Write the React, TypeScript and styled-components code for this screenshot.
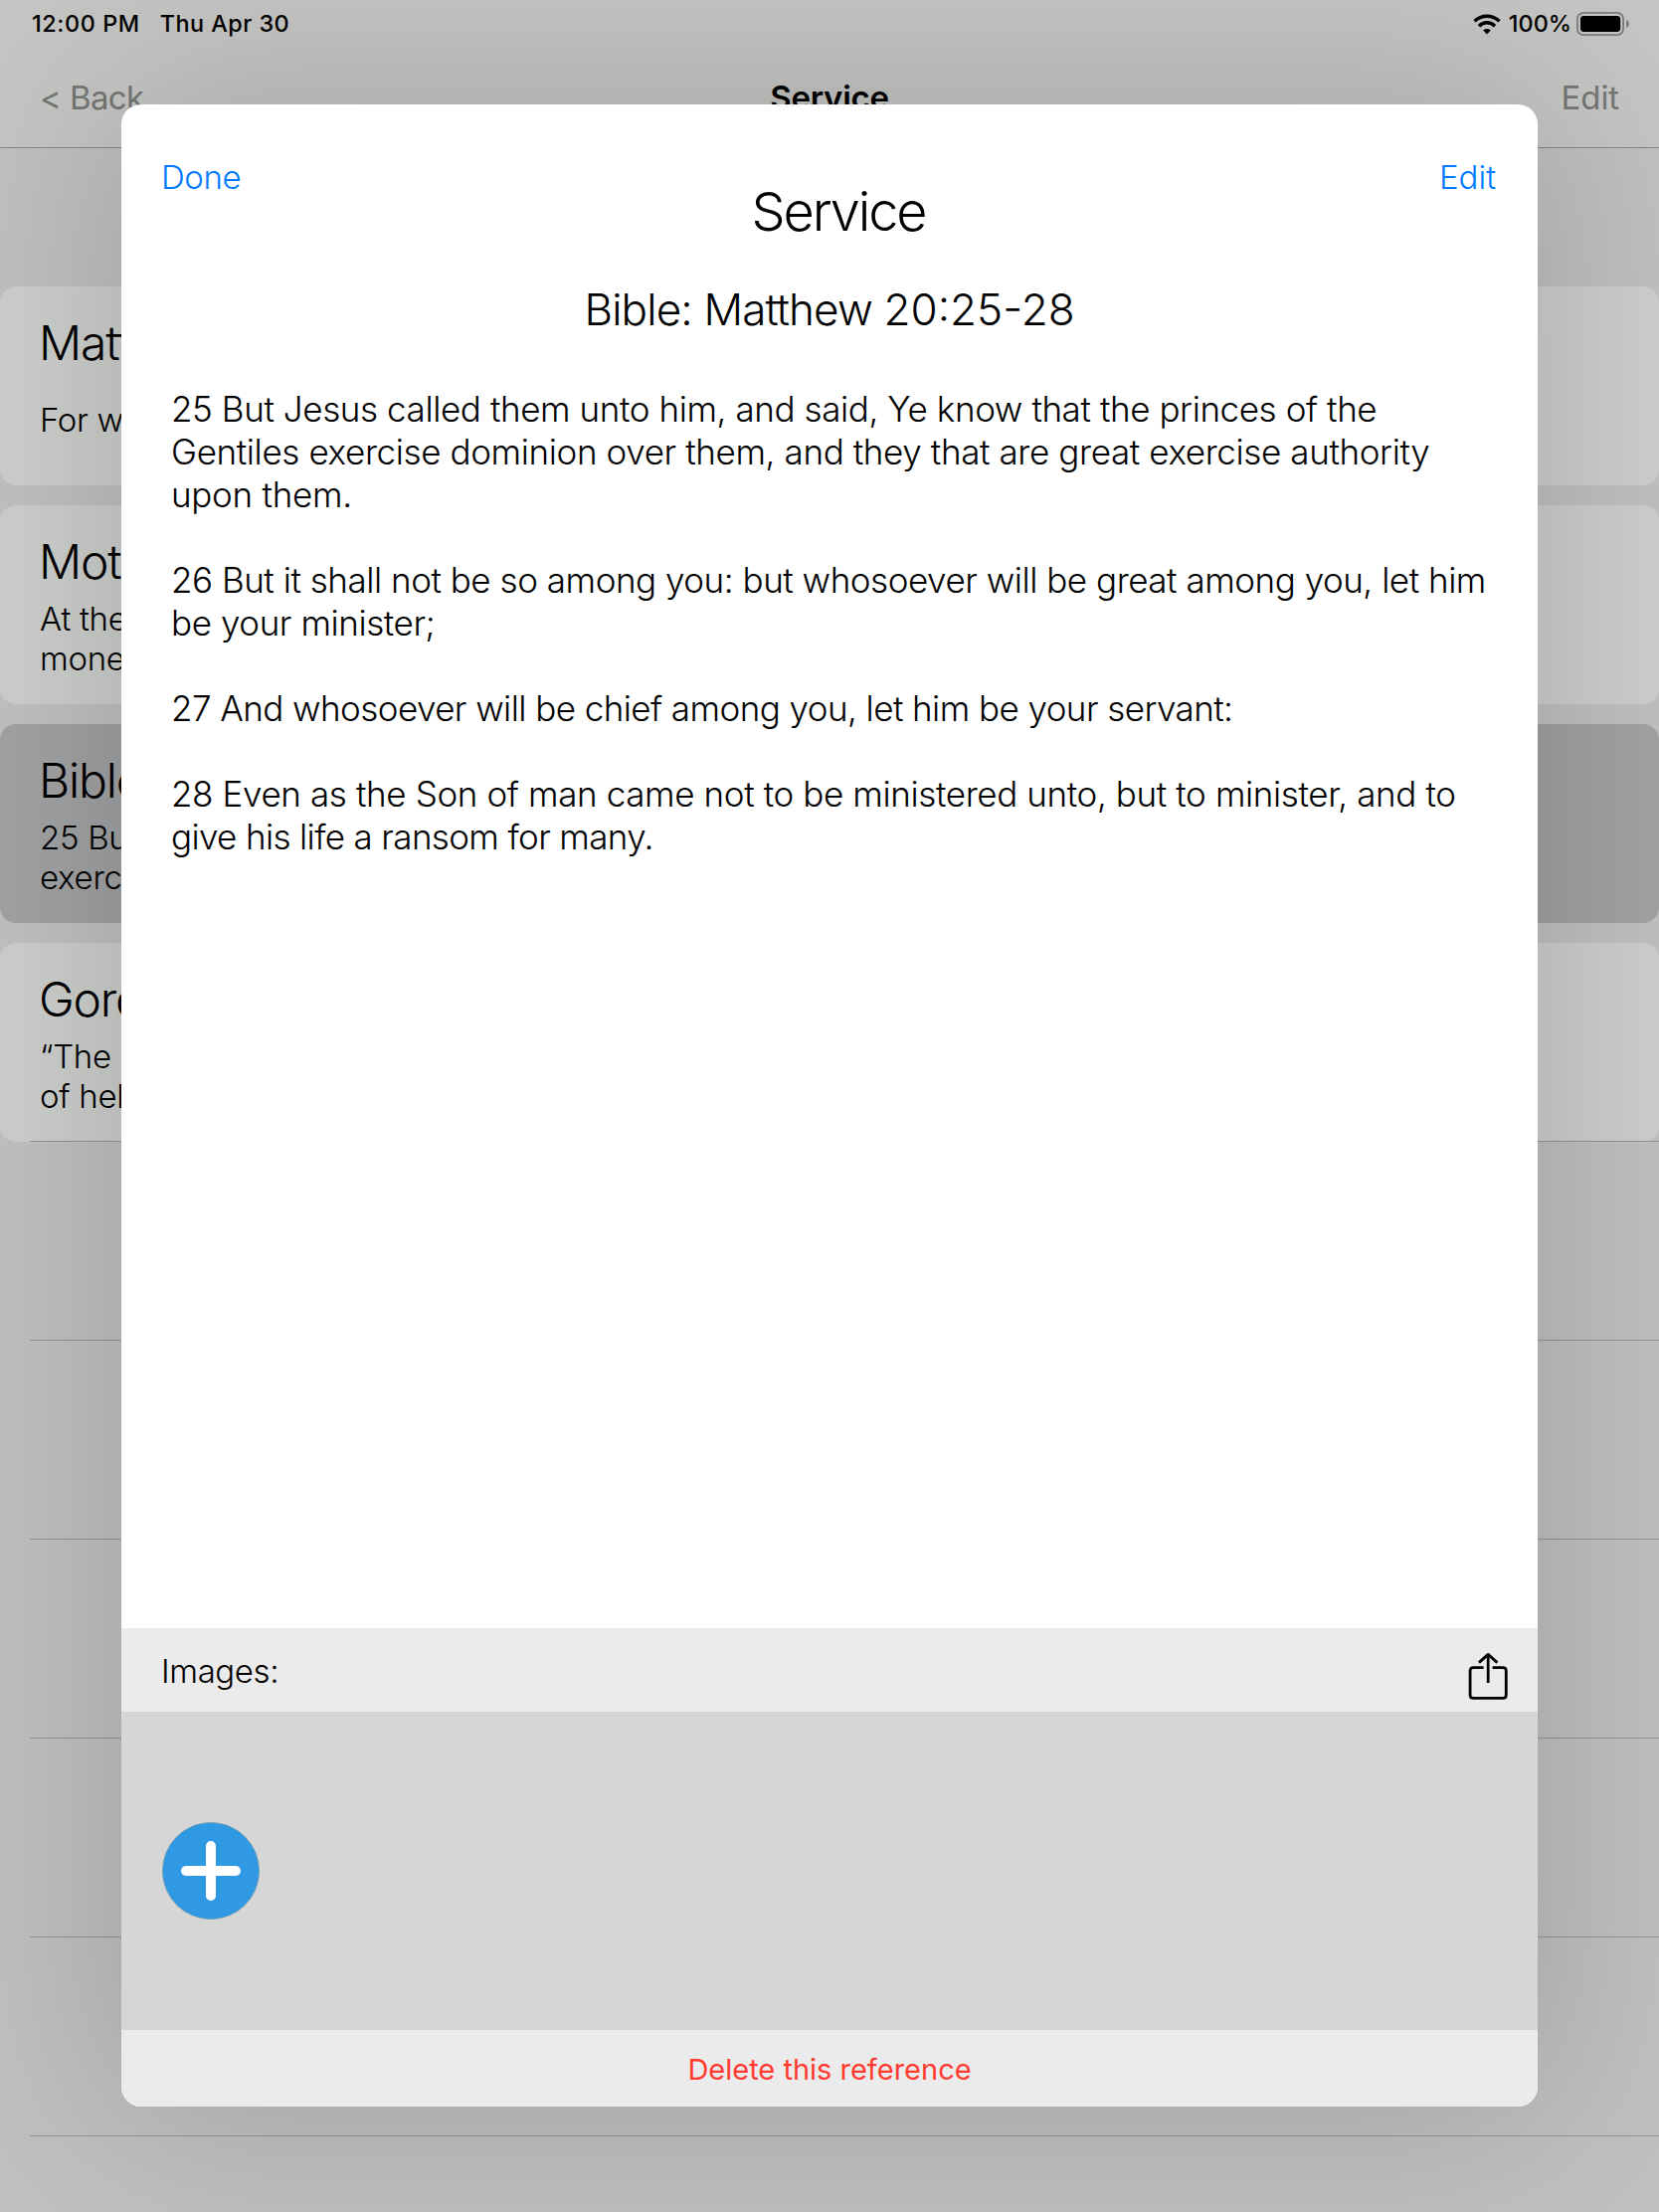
import React from "react";
import styled, { createGlobalStyle } from "styled-components";

const Global = createGlobalStyle`
  body { margin: 0; background: #c0c0c0; }
  * { box-sizing: border-box; }
`;

const Screen = styled.main`
  position: relative;
  display: flex;
  flex-direction: column;
  width: 1668px;
  height: 2224px;
  overflow: hidden;
  background: #c0c1be;
  color: #000;
  font-family: Inter, "Liberation Sans", sans-serif;
`;
const Label = styled.span<{ $size: number; $weight?: number; $track?: number }>`
  display: block;
  font-size: ${(p) => p.$size}px;
  font-weight: ${(p) => p.$weight ?? 300};
  letter-spacing: ${(p) => p.$track ?? 0}px;
  white-space: pre;
`;
const StatusBar = styled.div`
  display: flex;
  align-items: center;
  flex: none;
  height: 48px;
  line-height: 46px;
  padding: 0 30px 0 32px;
  background: #c5c5c3;
`;
const StatusDate = styled.div`
  flex: 1;
  margin-left: 20px;
`;
const StatusLevel = styled.div`
  margin: 0 5px 0 8px;
`;
const NavBar = styled.header`
  display: grid;
  grid-template-columns: 1fr auto 1fr;
  align-items: center;
  flex: none;
  height: 101px;
  padding: 0 40px;
  background: #c5c5c3;
  border-bottom: 1px solid #858683;
`;
const NavButton = styled.div<{ $end?: boolean }>`
  color: #757774;
  font-feature-settings: "calt" 0;
  text-align: ${(p) => (p.$end ? "right" : "left")};
`;
const CardList = styled.section`
  display: flex;
  flex-direction: column;
  flex: none;
  gap: 20px;
  padding-top: 139px;
`;
const Card = styled.article<{ $selected?: boolean }>`
  height: 200px;
  padding: 27px 40px 0;
  border-radius: 16px;
  background: ${(p) => (p.$selected ? "#a1a2a4" : "#cdcfcc")};
`;
const CardTitle = styled.div`
  height: 60px;
  margin-left: -1px;
  line-height: 60px;
`;
const CardBody = styled.div`
  display: flex;
  flex-direction: column;
  justify-content: center;
  height: 80px;
  margin-top: 7px;
  line-height: 40px;
`;
const EmptyRow = styled.div`
  flex: none;
  height: 200px;
  margin-left: 30px;
  border-top: 1px solid #949593;
`;
const EmptyRows = styled.div`
  display: flex;
  flex-direction: column;
  flex: none;
  margin-top: -1px;
`;
const Sheet = styled.section`
  position: absolute;
  left: 122px;
  top: 105px;
  display: flex;
  flex-direction: column;
  width: 1424px;
  height: 2013px;
  border-radius: 20px;
  background: #fff;
  box-shadow: 0 0 200px rgba(0, 10, 0, 0.19);
`;
const SheetHeader = styled.header`
  display: grid;
  grid-template-columns: 1fr auto 1fr;
  height: 140px;
  padding: 0 42px 0 40px;
`;
const SheetButton = styled.div<{ $end?: boolean }>`
  padding-top: 53px;
  line-height: 40px;
  color: #007aff;
  text-align: ${(p) => (p.$end ? "right" : "left")};
`;
const SheetTitle = styled.div`
  padding: 76px 0 0 20px;
  line-height: 64px;
`;
const Reference = styled.div`
  display: flex;
  justify-content: center;
  margin-top: 39px;
  line-height: 54px;
`;
const Passage = styled.div`
  display: flex;
  flex-direction: column;
  gap: 42.96px;
  flex: 1;
  padding: 52px 0 0 50px;
  line-height: 42.96px;
`;
const Verse = styled.div`
  display: flex;
  flex-direction: column;
  align-items: flex-start;
`;
const ImagesBar = styled.div`
  display: flex;
  justify-content: space-between;
  height: 84px;
  padding: 0 30px 0 40px;
  line-height: 86px;
  background: #ebebeb;
  svg { margin-top: 23.5px; }
`;
const ImagesStrip = styled.div`
  display: flex;
  align-items: center;
  height: 320px;
  padding-left: 41px;
  background: #d6d6d6;
`;
const SheetFooter = styled.footer`
  height: 77px;
  line-height: 79px;
  text-align: center;
  color: #ff3b30;
  background: #ebebeb;
  border-radius: 0 0 20px 20px;
`;

const Wifi = () => (
  <svg width="28" height="21" viewBox="0 0 28 21" fill="none" stroke="#000" strokeWidth="3.5">
    <path d="M1.5 7.3A17.9 17.9 0 0 1 26.5 7.3" />
    <path d="M6 12.2A11.2 11.2 0 0 1 22 12.2" />
    <path d="M14 20.6L10.2 16.6A5.6 5.6 0 0 1 17.8 16.6Z" fill="#000" stroke="none" />
  </svg>
);
const Battery = () => (
  <svg width="53" height="24" viewBox="0 0 53 24">
    <rect x="0.9" y="0.9" width="46.2" height="22.2" rx="6.2" fill="none" stroke="#7b7b7a" strokeWidth="1.8" />
    <rect x="4" y="4" width="40.2" height="16" rx="3.4" fill="#000" />
    <path d="M50.2 8C53.8 9.2 53.8 14.8 50.2 16Z" fill="#7b7b7a" />
  </svg>
);
const Share = () => (
  <svg width="40" height="48" viewBox="0 0 40 48" fill="none" stroke="#000" strokeWidth="2.8">
    <path d="M15.6 15.7H5.2Q2.1 15.7 2.1 18.8V43.2Q2.1 46.3 5.2 46.3H35.2Q38.3 46.3 38.3 43.2V18.8Q38.3 15.7 35.2 15.7H24.6" />
    <path d="M20.2 31V2.4" />
    <path d="M11 10.6L20.2 2.4L29.4 10.6" strokeLinejoin="round" />
  </svg>
);
const AddImage = () => (
  <svg width="98" height="98" viewBox="0 0 98 98">
    <circle cx="49" cy="49" r="48.5" fill="#2f99e3" stroke="#6f9aa8" strokeWidth="0.8" />
    <path d="M49 24V74M24 49H74" stroke="#fff" strokeWidth="10" strokeLinecap="round" />
  </svg>
);

const cards = [
  { title: "Matt", lines: ["For w"] },
  { title: "Moth", lines: ["At the", "mone"] },
  { title: "Bible", lines: ["25 Bu", "exerc"], selected: true },
  { title: "Gord", lines: ["“The", "of hel"] },
];

const verses: { text: string; track: number }[][] = [
  [
    { text: "25 But Jesus called them unto him, and said, Ye know that the princes of the", track: -0.41 },
    { text: "Gentiles exercise dominion over them, and they that are great exercise authority", track: -0.38 },
    { text: "upon them.", track: -0.28 },
  ],
  [
    { text: "26 But it shall not be so among you: but whosoever will be great among you, let him", track: -0.47 },
    { text: "be your minister;", track: -0.42 },
  ],
  [{ text: "27 And whosoever will be chief among you, let him be your servant:", track: -0.565 }],
  [
    { text: "28 Even as the Son of man came not to be ministered unto, but to minister, and to", track: -0.38 },
    { text: "give his life a ransom for many.", track: -0.64 },
  ],
];

export default function App() {
  return (
    <Screen>
      <Global />
      <StatusBar>
        <Label $size={23.4} $weight={500} $track={0.6}>12:00 PM</Label>
        <StatusDate><Label $size={23.4} $weight={500} $track={0.45}>Thu Apr 30</Label></StatusDate>
        <Wifi />
        <StatusLevel><Label $size={23.4} $weight={500}>100%</Label></StatusLevel>
        <Battery />
      </StatusBar>
      <NavBar>
        <NavButton><Label $size={33} $weight={380} $track={-0.6}>{"< Back"}</Label></NavButton>
        <Label $size={33} $weight={600} $track={-0.25}>Service</Label>
        <NavButton $end><Label $size={33} $weight={380} $track={-0.1}>Edit</Label></NavButton>
      </NavBar>
      <CardList>
        {cards.map((c) => (
          <Card key={c.title} $selected={c.selected}>
            <CardTitle><Label $size={48} $track={-1.2}>{c.title}</Label></CardTitle>
            <CardBody>
              {c.lines.map((l) => <Label key={l} $size={33} $track={-0.3}>{l}</Label>)}
            </CardBody>
          </Card>
        ))}
      </CardList>
      <EmptyRows>
        {[0, 1, 2, 3, 4, 5].map((n) => <EmptyRow key={n} />)}
      </EmptyRows>
      <Sheet>
        <SheetHeader>
          <SheetButton><Label $size={33} $track={-0.4}>Done</Label></SheetButton>
          <SheetTitle><Label $size={54} $track={-2.1}>Service</Label></SheetTitle>
          <SheetButton $end><Label $size={33}>Edit</Label></SheetButton>
        </SheetHeader>
        <Reference>
          <Label $size={44} $track={-0.85}>{"Bible: Matthew "}</Label>
          <Label $size={44} $track={0}>20:25-28</Label>
        </Reference>
        <Passage>
          {verses.map((lines, i) => (
            <Verse key={i}>
              {lines.map((l) => <Label key={l.text} $size={35} $track={l.track}>{l.text}</Label>)}
            </Verse>
          ))}
        </Passage>
        <ImagesBar>
          <Label $size={33} $track={-0.4}>Images:</Label>
          <Share />
        </ImagesBar>
        <ImagesStrip><AddImage /></ImagesStrip>
        <SheetFooter><Label $size={29} $weight={400}>Delete this reference</Label></SheetFooter>
      </Sheet>
    </Screen>
  );
}
